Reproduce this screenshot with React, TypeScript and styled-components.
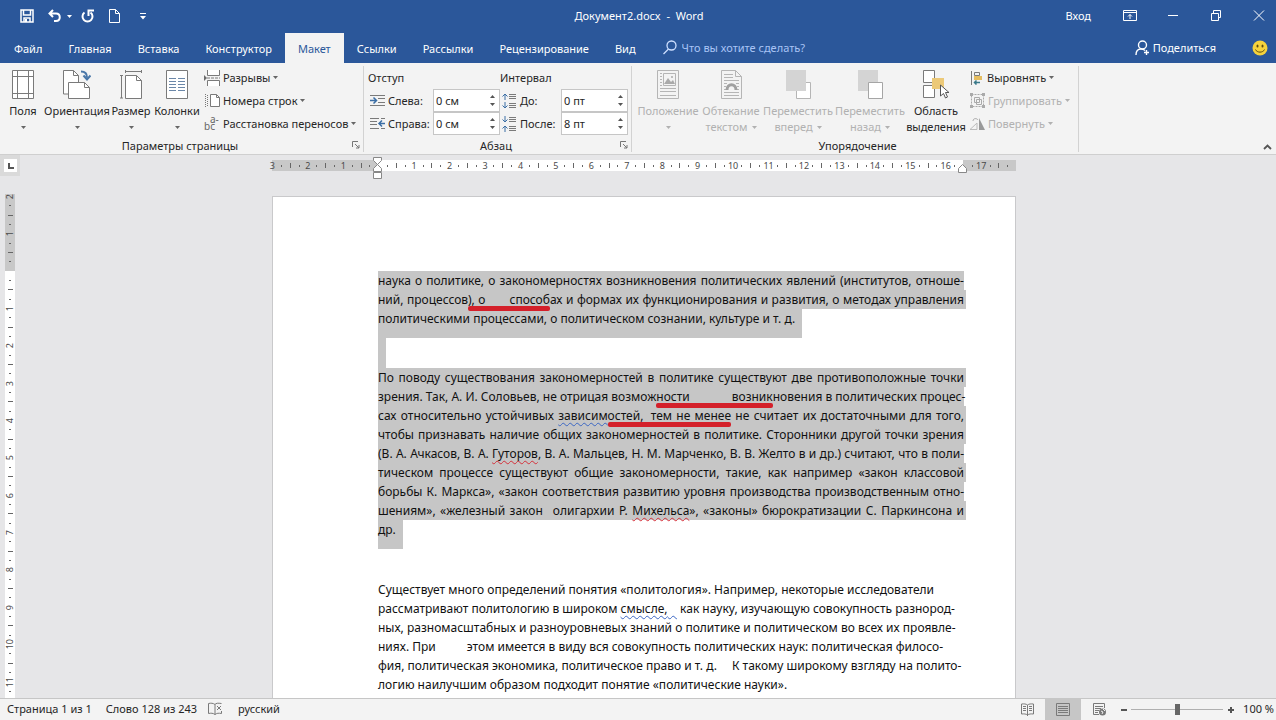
import React from 'react';
import styled, { createGlobalStyle, css } from 'styled-components';

const blue = '#2b579a';
const ink = '#262626';
const faded = '#b1b1b1';

const GlobalStyle = createGlobalStyle`
  * { box-sizing: border-box; }
  body { margin: 0; font-family: "Noto Sans", "Open Sans", sans-serif; font-size: 11px; color: ${ink}; }
  button, input { font: inherit; color: inherit; }
  button { border: 0; background: none; padding: 0; }
  svg { display: block; flex: none; }
  p, h1, h2 { margin: 0; font-size: inherit; font-weight: inherit; }
`;

const Window = styled.div`
  display: flex;
  flex-direction: column;
  height: 100vh;
  overflow: hidden;
  background: #e6e6e8;
`;

/* Title bar */
const TitleBar = styled.header`
  display: grid;
  grid-template-columns: 1fr auto 1fr;
  align-items: center;
  height: 32px;
  flex: none;
  background: ${blue};
  color: #fff;
`;
const QuickAccess = styled.div`
  display: flex;
  align-items: center;
  padding-left: 20px;
`;
const QuickButton = styled.button<{ $gap: number }>`
  margin-right: ${p => p.$gap}px;
`;
const DocTitle = styled.h1`
  white-space: pre;
  padding: 0 0 2px 2px;
`;
const WindowTools = styled.div`
  display: flex;
  align-items: center;
  justify-content: flex-end;
  gap: 29px;
  padding: 0 10px 2px 0;
`;
const SignIn = styled.button`
  margin-right: 3px;
`;

/* Tab strip */
const TabStrip = styled.nav`
  display: flex;
  align-items: stretch;
  height: 31px;
  flex: none;
  padding-left: 1px;
  background: ${blue};
  color: #fff;
`;
const Tab = styled.button<{ $active?: boolean }>`
  padding: 0 13px;
  margin-top: 1px;
  ${p => p.$active && css`background: #f3f3f3; color: ${blue};`}
`;
const TellMe = styled.label`
  display: flex;
  align-items: center;
  gap: 5px;
  margin-left: 14px;
`;
const TellInput = styled.input`
  width: 150px;
  border: 0;
  padding: 0;
  background: none;
  outline: none;
  &::placeholder { color: #a9c4f5; opacity: 1; }
`;
const ShareArea = styled.div`
  display: flex;
  align-items: center;
  margin-left: auto;
  gap: 36px;
  padding-right: 8px;
`;
const Share = styled.button`
  display: flex;
  align-items: center;
  gap: 3px;
`;

/* Ribbon */
const Ribbon = styled.section`
  display: flex;
  height: 92px;
  flex: none;
  padding-top: 3px;
  background: #f3f3f3;
  border-bottom: 1px solid #cfcfcf;
`;
const Group = styled.section<{ $width: number }>`
  display: flex;
  flex-direction: column;
  flex: none;
  width: ${p => p.$width}px;
  height: 86px;
  border-right: 1px solid #d2d2d2;
`;
const GroupBody = styled.div<{ $left?: number }>`
  display: flex;
  flex: 1;
  padding-left: ${p => p.$left ?? 0}px;
`;
const GroupFooter = styled.div`
  display: flex;
  align-items: center;
  height: 14px;
  padding-right: 3px;
`;
const GroupName = styled.h2`
  flex: 1;
  padding-left: 8px;
  text-align: center;
`;
const BigButton = styled.button<{ $width: number; $off?: boolean }>`
  display: flex;
  flex-direction: column;
  align-items: center;
  width: ${p => p.$width}px;
  padding-top: 4px;
  line-height: 16px;
  white-space: nowrap;
  color: ${p => (p.$off ? faded : ink)};
  > svg { margin-bottom: 4px; }
`;
const Caption = styled.span`
  display: flex;
  align-items: center;
  justify-content: center;
  gap: 4px;
  height: 16px;
`;
const SmallColumn = styled.div`
  display: flex;
  flex-direction: column;
  padding-left: 4px;
`;
const SmallButton = styled.button<{ $off?: boolean }>`
  display: flex;
  align-items: center;
  gap: 3px;
  height: 23px;
  white-space: nowrap;
  color: ${p => (p.$off ? faded : ink)};
`;
const FieldSet = styled.div<{ $label: number }>`
  display: grid;
  grid-template-columns: 20px ${p => p.$label}px 67px;
  grid-template-rows: 23px 23px 23px;
  align-items: center;
`;
const FieldTitle = styled.div`
  grid-column: 1 / -1;
`;
const IconCell = styled.div`
  padding-left: 2px;
`;
const Spin = styled.div`
  display: flex;
  height: 23px;
  background: #fff;
  border: 1px solid #c6c6c6;
`;
const SpinInput = styled.input`
  flex: 1;
  min-width: 0;
  border: 0;
  padding: 0 0 0 2px;
  background: none;
  outline: none;
`;
const SpinButtons = styled.div`
  display: flex;
  flex-direction: column;
  justify-content: space-evenly;
  width: 14px;
  align-items: center;
`;
const Collapse = styled.button`
  align-self: flex-end;
  margin: 0 4px 4px auto;
`;

/* Work area */
const RulerRow = styled.div`
  display: flex;
  height: 39px;
  flex: none;
`;
const TabStop = styled.button`
  display: grid;
  place-items: center;
  width: 20px;
  height: 21px;
  background: #fff;
  border: 4px solid #dadada;
  border-right-width: 3px;
`;
const RulerTrack = styled.div`
  display: flex;
  justify-content: center;
  flex: 1;
  padding: 5px 8px 0 0;
`;
const HRuler = styled.div`
  position: relative;
  width: 744px;
  height: 11px;
  background: linear-gradient(to right, #c8c8c8 106px, #fff 106px 691px, #c8c8c8 691px);
`;
const HMarks = styled.div`
  display: flex;
  height: 11px;
  margin: 0 4px 0 -4px;
  font-size: 9px;
  line-height: 11px;
  color: #4a4a4a;
`;
const VRuler = styled.div`
  flex: none;
  width: 10px;
  height: 520px;
  margin-left: 5px;
  background: linear-gradient(to bottom, #c8c8c8 77px, #fff 77px);
`;
const VMarks = styled.div`
  display: flex;
  flex-direction: column;
  height: 504px;
  margin-top: -2px;
  font-size: 9px;
  line-height: 10px;
  color: #4a4a4a;
`;
const Cell = styled.div`
  display: flex;
  flex: 1 1 0;
  min-width: 0;
  min-height: 0;
  align-items: center;
  justify-content: center;
`;
const Turned = styled.span`
  writing-mode: vertical-rl;
  transform: rotate(180deg);
`;
const Tick = styled.i<{ $w: number; $h: number }>`
  flex: none;
  width: ${p => p.$w}px;
  height: ${p => p.$h}px;
  background: #666;
`;
const Indent = styled.svg<{ $x: number; $y: number }>`
  position: absolute;
  left: ${p => p.$x}px;
  top: ${p => p.$y}px;
`;
const WorkArea = styled.main`
  display: flex;
  flex: 1;
  min-height: 0;
  overflow: hidden;
`;
const Canvas = styled.div`
  display: flex;
  justify-content: center;
  flex: 1;
  padding: 2px 3px 0 0;
`;
const Page = styled.article`
  width: 744px;
  height: 1050px;
  padding: 74px 0 0 105px;
  background: #fff;
  border: 1px solid #c9c9cb;
  font-size: 12px;
  line-height: 19px;
  color: #111;
`;
const Para = styled.p<{ $after: number }>`
  margin-bottom: ${p => p.$after}px;
`;
const Line = styled.span<{ $mode: 'full' | 'hyphen' | 'end' | 'plain' }>`
  display: block;
  white-space: nowrap;
  width: ${p => (p.$mode === 'end' ? 'max-content' : p.$mode === 'full' ? '588px' : '586px')};
  padding-right: ${p => (p.$mode === 'full' ? 2 : p.$mode === 'end' ? 7 : 0)}px;
  padding-bottom: ${p => (p.$mode === 'end' ? 10 : 0)}px;
  background: ${p => (p.$mode === 'plain' ? 'none' : '#c6c6c6')};
  text-align-last: ${p => (p.$mode === 'full' || p.$mode === 'hyphen' ? 'justify' : 'left')};
`;
const EmptyLine = styled.span`
  display: block;
  width: 8px;
  height: 30px;
  background: #c6c6c6;
`;
const Gap = styled.span<{ $w: number }>`
  display: inline-block;
  width: ${p => p.$w}px;
`;
const Marked = styled.span`
  position: relative;
  &::after {
    content: '';
    position: absolute;
    left: 0;
    right: 0;
    bottom: -3px;
    height: 5px;
    border-radius: 2px;
    background: #d4202a;
  }
`;
const Wavy = styled.span<{ $color: string }>`
  text-decoration: underline wavy ${p => p.$color} 1px;
  text-underline-offset: 2px;
  text-decoration-skip-ink: none;
`;

/* Status bar */
const StatusBar = styled.footer`
  display: flex;
  align-items: center;
  height: 22px;
  flex: none;
  padding-left: 7px;
  background: #f3f3f3;
  border-top: 1px solid #c6c6c6;
`;
const StatusItem = styled.button<{ $gap: number }>`
  margin-right: ${p => p.$gap}px;
  padding-bottom: 2px;
`;
const ViewButton = styled.button<{ $on?: boolean }>`
  display: grid;
  place-items: center;
  width: 36px;
  height: 21px;
  background: ${p => (p.$on ? '#c6c6c6' : 'none')};
`;
const Views = styled.div`
  display: flex;
  margin: 0 4px 0 auto;
`;
const ZoomSlider = styled.input`
  appearance: none;
  width: 92px;
  height: 16px;
  margin: 0 4px;
  background: linear-gradient(#b0b0b0, #b0b0b0) center / 100% 1px no-repeat;
  &::-webkit-slider-thumb { appearance: none; width: 5px; height: 11px; background: #666; }
`;
const ZoomValue = styled.button`
  margin: 0 2px 0 8px;
  padding-bottom: 2px;
  white-space: nowrap;
`;

const Caret = ({ color = '#666' }: { color?: string }) => (
  <svg width="5" height="3" viewBox="0 0 5 3"><path d="M0 0h5L2.5 3z" fill={color} /></svg>
);
const UpCaret = () => <svg width="5" height="3" viewBox="0 0 5 3"><path d="M0 3h5L2.500 0z" fill="#555" /></svg>;
const Launcher = () => (
  <svg width="8" height="8" viewBox="0 0 8 8" fill="none" stroke="#777"><path d="M.5 6V.5H6M3 3l4 4M7 4v3H4" /></svg>
);

const Icon = ({ w, h, children }: { w: number; h: number; children: React.ReactNode }) => (
  <svg width={w} height={h} viewBox={`0 0 ${w} ${h}`} fill="none" stroke="#7a7a7a">{children}</svg>
);

const MarginsIcon = () => (
  <Icon w={22} h={29}><path fill="#fff" d="M.5.5h21v28H.5z" /><path d="M5.500 0v29M16.500 0v29M0 6.500h22M0 23.500h22" /></Icon>
);
const OrientationIcon = () => (
  <Icon w={28} h={29}>
    <path fill="#fff" d="M.5.5h10l5 5V24H.5z" /><path d="M10.500.5v5h5" />
    <path fill="#fff" d="M5.500 12.500h16l5 5v11h-21z" /><path d="M21.500 12.500v5h5" />
    <path d="M18 1.500c4 0 6 2 6 6M20.500 5.500l3.500 4 3.500-4" stroke="#4a77a8" strokeWidth="2" />
  </Icon>
);
const SizeIcon = () => (
  <Icon w={23} h={29}>
    <path fill="#fff" d="M5.500 5.500h11l5 5v18h-16z" /><path d="M16.500 5.500v5h5" />
    <path d="M5 1.500h17M5.500 0v3M21.500 0v3M1.500 6v22M0 5.500h3M0 28h3" />
  </Icon>
);
const ColumnsIcon = () => (
  <Icon w={22} h={29}>
    <path fill="#fff" d="M.5.5h21v28H.5z" />
    <path stroke="#6b87a8" d="M3 8.500h7M12 8.500h7M3 11.500h7M12 11.500h7M3 14.500h7M12 14.500h7M3 17.500h7M12 17.500h7M3 20.500h7M12 20.500h7" />
  </Icon>
);
const BreaksIcon = () => (
  <Icon w={16} h={16}><path fill="#fff" d="M3.500 0v5.500h12V0M3.500 16v-5.500h12V16" /><path d="M3 8h13" strokeDasharray="3 1" /><path d="M0 5v6l3-3z" fill="#6b6b6b" stroke="none" /></Icon>
);
const LineNumbersIcon = () => (
  <Icon w={16} h={14}><path fill="#fff" d="M6.500.5h6l3 3v9h-9z" /><path d="M12.500.5v3h3" /><path strokeDasharray="1 1" d="M1.500 0v13M3.500 1v12" /></Icon>
);
const HyphenIcon = () => (
  <svg width="16" height="16" viewBox="0 0 16 16" fill="#666" fontSize="10" overflow="visible"><text x="0" y="14">bc</text><text x="6" y="7">a-</text></svg>
);
const IndentIcon = ({ right }: { right?: boolean }) => (
  <Icon w={16} h={13}>
    {right
      ? <><path d="M0 1.500h9M0 4.500h7M0 7.500h7M0 11.500h9M11 1.500h4M11 11.500h4" /><path d="M15 6.500H9M12 3.500l-3 3 3 3" stroke="#3b6ea5" strokeWidth="1.500" /></>
      : <><path d="M0 1.500h15M8 4.500h7M8 8.500h7M0 11.500h15" /><path d="M0 6.500h6M3.500 3.500l3 3-3 3" stroke="#3b6ea5" strokeWidth="1.500" /></>}
  </Icon>
);
const SpacingIcon = ({ after }: { after?: boolean }) => (
  <Icon w={15} h={16}>
    <path d="M7 1.500h7M7 3.500h7M7 5.500h7M7 10.500h7M7 12.500h7M7 14.500h7" />
    {after
      ? <path stroke="#3b6ea5" d="M3 0v6M.5 3.500L3 6l2.500-2.500M3 16v-6M.5 12.500L3 10l2.500 2.500" />
      : <path stroke="#3b6ea5" d="M3 7V1M.5 3.500L3 1l2.500 2.500M3 9v6M.5 12.500L3 15l2.500-2.500" />}
  </Icon>
);
const PositionIcon = () => (
  <Icon w={22} h={29}>
    <g stroke="#b5b5b5"><path d="M.5.5h21v28H.5zM3 3.500h2M3 6.500h2M3 9.500h2M3 12.500h2M3 15.500h2M3 18.500h16M3 21.500h16M3 25.500h16" /><path d="M6.500 3.500h12v12h-12z" /></g>
    <path d="M7 14l4-6 3 4 2-2 2 4z" fill="#aaa" stroke="none" /><circle cx="15" cy="7" r="1" fill="#aaa" stroke="none" />
  </Icon>
);
const WrapIcon = () => (
  <Icon w={21} h={29}>
    <g stroke="#b5b5b5"><path d="M.5.5h14l6 6v22H.5zM14.500.5v6h6M3 4.500h9M3 7.500h9M3 10.500h15M3 13.500h3M15 13.500h3M3 16.500h2M16 16.500h2M3 19.500h2M16 19.500h2M3 22.500h15M3 25.500h15" /></g>
    <path d="M6 20c0-7 9-7 9 0" stroke="#a0a0a0" strokeWidth="3" />
  </Icon>
);
const ForwardIcon = () => (
  <Icon w={25} h={29}><path stroke="#b5b5b5" d="M10.500 12.500h14v16h-14z" fill="#fff" /><path d="M0 0h20v21H0z" fill="#d4d4d4" stroke="none" /></Icon>
);
const BackwardIcon = () => (
  <Icon w={25} h={29}><path d="M0 0h20v21H0z" fill="#d4d4d4" stroke="none" /><path stroke="#a5a5a5" d="M10.500 12.500h14v16h-14z" fill="#fff" /></Icon>
);
const SelectionIcon = () => (
  <Icon w={26} h={29}>
    <path fill="#fff" d="M.5.5h11v12H.5zM.5 15.500h11v12H.5z" />
    <path d="M9 8h12v11H9z" fill="#ecc978" stroke="none" />
    <path d="M17.500 15v11l3-2.500 2 4.500 2-1-2-4.500h3.500z" fill="#fff" stroke="#555" />
  </Icon>
);
const AlignIcon = () => (
  <Icon w={14} h={14}><path d="M1.500 0v14" /><path d="M4.500 1.500h5v3h-5z" /><path d="M4 5h8v4H4z" fill="#e5bd60" stroke="none" /><path d="M10 11.500H4M6.500 9.500l-2 2 2 2" stroke="#3b7a8a" strokeWidth="1.500" /></Icon>
);
const GroupIcon = () => (
  <Icon w={15} h={15}><g stroke="#aaa"><path d="M1.500 1.500h12v12h-12z" strokeDasharray="2 1" /><path d="M4.500 4.500h5v5h-5zM6.500 6.500h5v5h-5z" /></g><path d="M0 0h3v3H0zM12 0h3v3h-3zM0 12h3v3H0zM12 12h3v3h-3z" fill="#aaa" stroke="none" /></Icon>
);
const RotateIcon = () => (
  <Icon w={15} h={13}><path d="M0 12.500h7V6z" stroke="#bbb" /><path d="M9 1v12h6z" fill="#999" stroke="none" /><path d="M3 4c0-3 4-3 5-1" stroke="#aaa" /></Icon>
);

const quarterMarks = (from: number, to: number) =>
  Array.from({ length: to - from + 1 }, (_, i) => from + i);

const HorizontalMarks = () => (
  <HMarks>
    {quarterMarks(-12, 71).map(q => (
      <Cell key={q}>
        {q === 0 || q === 66 ? null : q % 4 === 0 ? <span>{Math.abs(q / 4)}</span>
          : <Tick $w={1} $h={q % 2 === 0 ? 5 : 2} />}
      </Cell>
    ))}
  </HMarks>
);
const VerticalMarks = () => (
  <VMarks>
    {quarterMarks(-8, 45).map(q => (
      <Cell key={q}>
        {q === 0 ? null : q % 4 === 0 ? <Turned>{Math.abs(q / 4)}</Turned>
          : <Tick $h={1} $w={q % 2 === 0 ? 5 : 2} />}
      </Cell>
    ))}
  </VMarks>
);

const SpinField = ({ id, value }: { id: string; value: string }) => (
  <Spin>
    <SpinInput id={id} defaultValue={value} />
    <SpinButtons>
      <button aria-label="Больше"><UpCaret /></button>
      <button aria-label="Меньше"><Caret color="#555" /></button>
    </SpinButtons>
  </Spin>
);

export default function App() {
  return (
    <Window>
      <GlobalStyle />
      <TitleBar>
        <QuickAccess>
          <QuickButton $gap={14} aria-label="Сохранить">
            <svg width="14" height="14" viewBox="0 0 14 14" fill="none" stroke="#fff" strokeWidth="1.500"><path d="M1 1h12v12H1zM3.500 1v5h7V1M4 13V9h6v4" /><path d="M5 10h2v3H5z" fill="#fff" stroke="none" /></svg>
          </QuickButton>
          <QuickButton $gap={6} aria-label="Отменить">
            <svg width="13" height="14" viewBox="0 0 13 14" fill="none" stroke="#fff" strokeWidth="2"><path d="M5 1L1.500 4.500 5 8M2 4.500h6c5 0 5 7.500 0 7.500H6" /></svg>
          </QuickButton>
          <QuickButton $gap={9} aria-label="Список отмены"><Caret color="#fff" /></QuickButton>
          <QuickButton $gap={15} aria-label="Повторить">
            <svg width="13" height="14" viewBox="0 0 13 14" fill="none" stroke="#fff" strokeWidth="2"><path d="M3.500 3.500a5 5 0 1 0 6 0M7.500 7V1.500H13" /></svg>
          </QuickButton>
          <QuickButton $gap={20} aria-label="Создать">
            <svg width="11" height="14" viewBox="0 0 11 14" fill="none" stroke="#fff"><path d="M.5.5h6l4 4v9H.5zM6.500.5v4h4" /></svg>
          </QuickButton>
          <QuickButton $gap={0} aria-label="Настроить панель">
            <svg width="6" height="7" viewBox="0 0 6 7" fill="#fff"><path d="M0 0h6v1H0zM0 3h6L3 6.500z" /></svg>
          </QuickButton>
        </QuickAccess>
        <DocTitle>{'Документ2.docx  -  Word'}</DocTitle>
        <WindowTools>
          <SignIn>Вход</SignIn>
          <button aria-label="Параметры ленты">
            <svg width="14" height="11" viewBox="0 0 14 11" fill="none" stroke="#fff"><path d="M.5.5h13v10H.5zM1 2.500h12M7 9V4.500M5 6.500l2-2 2 2" /></svg>
          </button>
          <button aria-label="Свернуть">
            <svg width="14" height="11" viewBox="0 0 14 11" stroke="#fff"><path d="M2 5.500h10" /></svg>
          </button>
          <button aria-label="Восстановить">
            <svg width="14" height="11" viewBox="0 0 14 11" fill="none" stroke="#fff"><path d="M2.500 3.500h7v7h-7zM4.500 3V.5h7v7h-2" /></svg>
          </button>
          <button aria-label="Закрыть">
            <svg width="14" height="11" viewBox="0 0 14 11" stroke="#fff"><path d="M2 .5l10 10M12 .5l-10 10" /></svg>
          </button>
        </WindowTools>
      </TitleBar>

      <TabStrip>
        <Tab>Файл</Tab>
        <Tab>Главная</Tab>
        <Tab>Вставка</Tab>
        <Tab>Конструктор</Tab>
        <Tab $active>Макет</Tab>
        <Tab>Ссылки</Tab>
        <Tab>Рассылки</Tab>
        <Tab>Рецензирование</Tab>
        <Tab>Вид</Tab>
        <TellMe>
          <svg width="14" height="15" viewBox="0 0 14 15" fill="none" stroke="#cfe0ff" strokeWidth="1.300"><circle cx="8.500" cy="5.500" r="4.500" /><path d="M5.500 9L.5 14" /></svg>
          <TellInput placeholder="Что вы хотите сделать?" />
        </TellMe>
        <ShareArea>
          <Share>
            <svg width="15" height="16" viewBox="0 0 15 16" fill="none" stroke="#fff" strokeWidth="1.400"><circle cx="7.500" cy="5" r="4" /><path d="M1 15c0-4 2-6 5-6 2 0 3 .5 4 1.500M11.500 10v5M9 12.500h5" /></svg>
            Поделиться
          </Share>
          <button aria-label="Отзыв">
            <svg width="16" height="16" viewBox="0 0 16 16"><circle cx="8" cy="8" r="7.500" fill="#f6d33c" /><ellipse cx="5.500" cy="6" rx="1" ry="1.600" fill="#5a4a10" /><ellipse cx="10.500" cy="6" rx="1" ry="1.600" fill="#5a4a10" /><path d="M3.500 9.500c1.500 3.500 7.500 3.500 9 0" fill="none" stroke="#5a4a10" /></svg>
          </button>
        </ShareArea>
      </TabStrip>

      <Ribbon>
        <Group $width={364}>
          <GroupBody>
            <BigButton $width={46}><MarginsIcon />Поля<Caption><Caret /></Caption></BigButton>
            <BigButton $width={62}><OrientationIcon />Ориентация<Caption><Caret /></Caption></BigButton>
            <BigButton $width={46}><SizeIcon />Размер<Caption><Caret /></Caption></BigButton>
            <BigButton $width={46}><ColumnsIcon />Колонки<Caption><Caret /></Caption></BigButton>
            <SmallColumn>
              <SmallButton><BreaksIcon />Разрывы <Caret /></SmallButton>
              <SmallButton><LineNumbersIcon />Номера строк <Caret /></SmallButton>
              <SmallButton><HyphenIcon />Расстановка переносов <Caret /></SmallButton>
            </SmallColumn>
          </GroupBody>
          <GroupFooter><GroupName>Параметры страницы</GroupName><button aria-label="Параметры страницы"><Launcher /></button></GroupFooter>
        </Group>

        <Group $width={268}>
          <GroupBody $left={4}>
            <FieldSet $label={45}>
              <FieldTitle>Отступ</FieldTitle>
              <IconCell><IndentIcon /></IconCell><label htmlFor="left">Слева:</label><SpinField id="left" value="0 см" />
              <IconCell><IndentIcon right /></IconCell><label htmlFor="right">Справа:</label><SpinField id="right" value="0 см" />
            </FieldSet>
            <FieldSet $label={41}>
              <FieldTitle>Интервал</FieldTitle>
              <IconCell><SpacingIcon /></IconCell><label htmlFor="before">До:</label><SpinField id="before" value="0 пт" />
              <IconCell><SpacingIcon after /></IconCell><label htmlFor="after">После:</label><SpinField id="after" value="8 пт" />
            </FieldSet>
          </GroupBody>
          <GroupFooter><GroupName>Абзац</GroupName><button aria-label="Абзац"><Launcher /></button></GroupFooter>
        </Group>

        <Group $width={447}>
          <GroupBody $left={4}>
            <BigButton $width={64} $off><PositionIcon />Положение<Caption><Caret color={faded} /></Caption></BigButton>
            <BigButton $width={62} $off><WrapIcon />Обтекание<Caption>текстом<Caret color={faded} /></Caption></BigButton>
            <BigButton $width={72} $off><ForwardIcon />Переместить<Caption>вперед<Caret color={faded} /></Caption></BigButton>
            <BigButton $width={72} $off><BackwardIcon />Переместить<Caption>назад<Caret color={faded} /></Caption></BigButton>
            <BigButton $width={60}><SelectionIcon />Область<Caption>выделения</Caption></BigButton>
            <SmallColumn>
              <SmallButton><AlignIcon />Выровнять <Caret /></SmallButton>
              <SmallButton $off><GroupIcon />Группировать <Caret color={faded} /></SmallButton>
              <SmallButton $off><RotateIcon />Повернуть <Caret color={faded} /></SmallButton>
            </SmallColumn>
          </GroupBody>
          <GroupFooter><GroupName>Упорядочение</GroupName></GroupFooter>
        </Group>
        <Collapse aria-label="Свернуть ленту">
          <svg width="9" height="6" viewBox="0 0 9 6" fill="none" stroke="#555" strokeWidth="1.800"><path d="M1 5l3.500-3.500L8 5" /></svg>
        </Collapse>
      </Ribbon>

      <RulerRow>
        <TabStop aria-label="Табуляция"><svg width="6" height="6" viewBox="0 0 6 6" fill="none" stroke="#555" strokeWidth="2"><path d="M1 0v5h5" /></svg></TabStop>
        <RulerTrack>
          <HRuler>
            <HorizontalMarks />
            <Indent $x={101} $y={-3} width="9" height="22" viewBox="0 0 9 22" fill="#fff" stroke="#888"><path d="M.5.5h8v3l-4 4-4-4zM.5 14.500v-3l4-4 4 4v3zM.5 15.500h8v6h-8z" /></Indent>
            <Indent $x={686} $y={4} width="9" height="9" viewBox="0 0 9 9" fill="#fff" stroke="#888"><path d="M.5 8.500v-4l4-4 4 4v4z" /></Indent>
          </HRuler>
        </RulerTrack>
      </RulerRow>

      <WorkArea>
        <VRuler><VerticalMarks /></VRuler>
        <Canvas>
          <Page>
            <Para $after={0}>
              <Line $mode="hyphen">наука о политике, о закономерностях возникновения политических явлений (институтов, отноше-</Line>
              <Line $mode="full">ний, процессов<Marked>), о<Gap $w={24} />способ</Marked>ах и формах их функционирования и развития, о методах управления</Line>
              <Line $mode="end">политическими процессами, о политическом сознании, культуре и т. д.</Line>
            </Para>
            <Para $after={0}><EmptyLine /></Para>
            <Para $after={31}>
              <Line $mode="full">По поводу существования закономерностей в политике существуют две противоположные точки</Line>
              <Line $mode="hyphen">зрения. Так, А. И. Соловьев, не отрицая возмож<Marked>ности<Gap $w={42} />возник</Marked>новения в политических процес-</Line>
              <Line $mode="full">сах относительно устойчивых <Wavy $color="#3b66c4">зависим</Wavy><Marked><Wavy $color="#3b66c4">остей,</Wavy><Gap $w={3} /> тем не менее</Marked> не считает их достаточными для того,</Line>
              <Line $mode="full">чтобы признавать наличие общих закономерностей в политике. Сторонники другой точки зрения</Line>
              <Line $mode="hyphen">(В. А. Ачкасов, В. А. <Wavy $color="#d4303a">Гуторов</Wavy>, В. А. Мальцев, Н. М. Марченко, В. В. Желто в и др.) считают, что в поли-</Line>
              <Line $mode="full">тическом процессе существуют общие закономерности, такие, как например «закон классовой</Line>
              <Line $mode="hyphen">борьбы К. Маркса», «закон соответствия развитию уровня производства производственным отно-</Line>
              <Line $mode="full">шениям», «железный закон<Gap $w={10} />олигархии Р. <Wavy $color="#d4303a">Михельса</Wavy>», «законы» бюрократизации С. Паркинсона и</Line>
              <Line $mode="end">др.</Line>
            </Para>
            <Para $after={0}>
              <Line $mode="plain">Существует много определений понятия «политология». Например, некоторые исследователи</Line>
              <Line $mode="plain">рассматривают политологию в широком <Wavy $color="#3b66c4">смысле,{'\u00a0\u00a0\u00a0'}</Wavy> как науку, изучающую совокупность разнород-</Line>
              <Line $mode="plain">ных, разномасштабных и разноуровневых знаний о политике и политическом во всех их проявле-</Line>
              <Line $mode="plain">ниях. При<Gap $w={31} />этом имеется в виду вся совокупность политических наук: политическая филосо-</Line>
              <Line $mode="plain">фия, политическая экономика, политическое право и т. д.<Gap $w={15} />К такому широкому взгляду на полито-</Line>
              <Line $mode="plain">логию наилучшим образом подходит понятие «политические науки».</Line>
            </Para>
          </Page>
        </Canvas>
      </WorkArea>

      <StatusBar>
        <StatusItem $gap={14}>Страница 1 из 1</StatusItem>
        <StatusItem $gap={11}>Слово 128 из 243</StatusItem>
        <StatusItem $gap={16} aria-label="Правописание">
          <Icon w={14} h={13}><path d="M7 2.500C5 1 3 1 .5 1.500v10c2.500-.5 4.500-.5 6.500 1zM7 2.500C8 1 10 1 13.500 1.500M13.500 9v2.500c-3-.5-4.500-.5-6.500 1M9 4l4 4M13 4l-4 4" /></Icon>
        </StatusItem>
        <StatusItem $gap={0}>русский</StatusItem>
        <Views>
          <ViewButton aria-label="Режим чтения">
            <Icon w={13} h={13}><path d="M6.500 2C5 .8 3 .8.5 1v10c2.500-.2 4.500-.2 6 1 1.500-1.200 3.500-1.200 6-1V1C10 .8 8 .8 6.500 2zM6.500 2v11M2 3.500h3M2 5.500h3M2 7.500h3M8 3.500h3M8 5.500h3M8 7.500h3" /></Icon>
          </ViewButton>
          <ViewButton $on aria-label="Разметка страницы">
            <Icon w={14} h={13}><path d="M.5.5h13v12H.5zM2 3.500h10M2 5.500h10M2 7.500h10M2 9.500h10" /></Icon>
          </ViewButton>
          <ViewButton aria-label="Веб-документ">
            <Icon w={13} h={13}><path d="M6 11.500H.5V.5h11V5M2 3.500h8M2 5.500h6M2 7.500h4M2 9.500h3" /><circle cx="9.500" cy="9" r="3.500" fill="#777" stroke="none" /><path d="M8 8l2 1-1 2M10 6l2 2" stroke="#f3f3f3" /></Icon>
          </ViewButton>
        </Views>
        <button aria-label="Уменьшить"><svg width="6" height="8" viewBox="0 0 6 8" stroke="#555" strokeWidth="2"><path d="M0 4h6" /></svg></button>
        <ZoomSlider type="range" aria-label="Масштаб" defaultValue={50} />
        <button aria-label="Увеличить"><svg width="8" height="8" viewBox="0 0 8 8" stroke="#555" strokeWidth="2"><path d="M1 4h6M4 1v6" /></svg></button>
        <ZoomValue>100 %</ZoomValue>
      </StatusBar>
    </Window>
  );
}
